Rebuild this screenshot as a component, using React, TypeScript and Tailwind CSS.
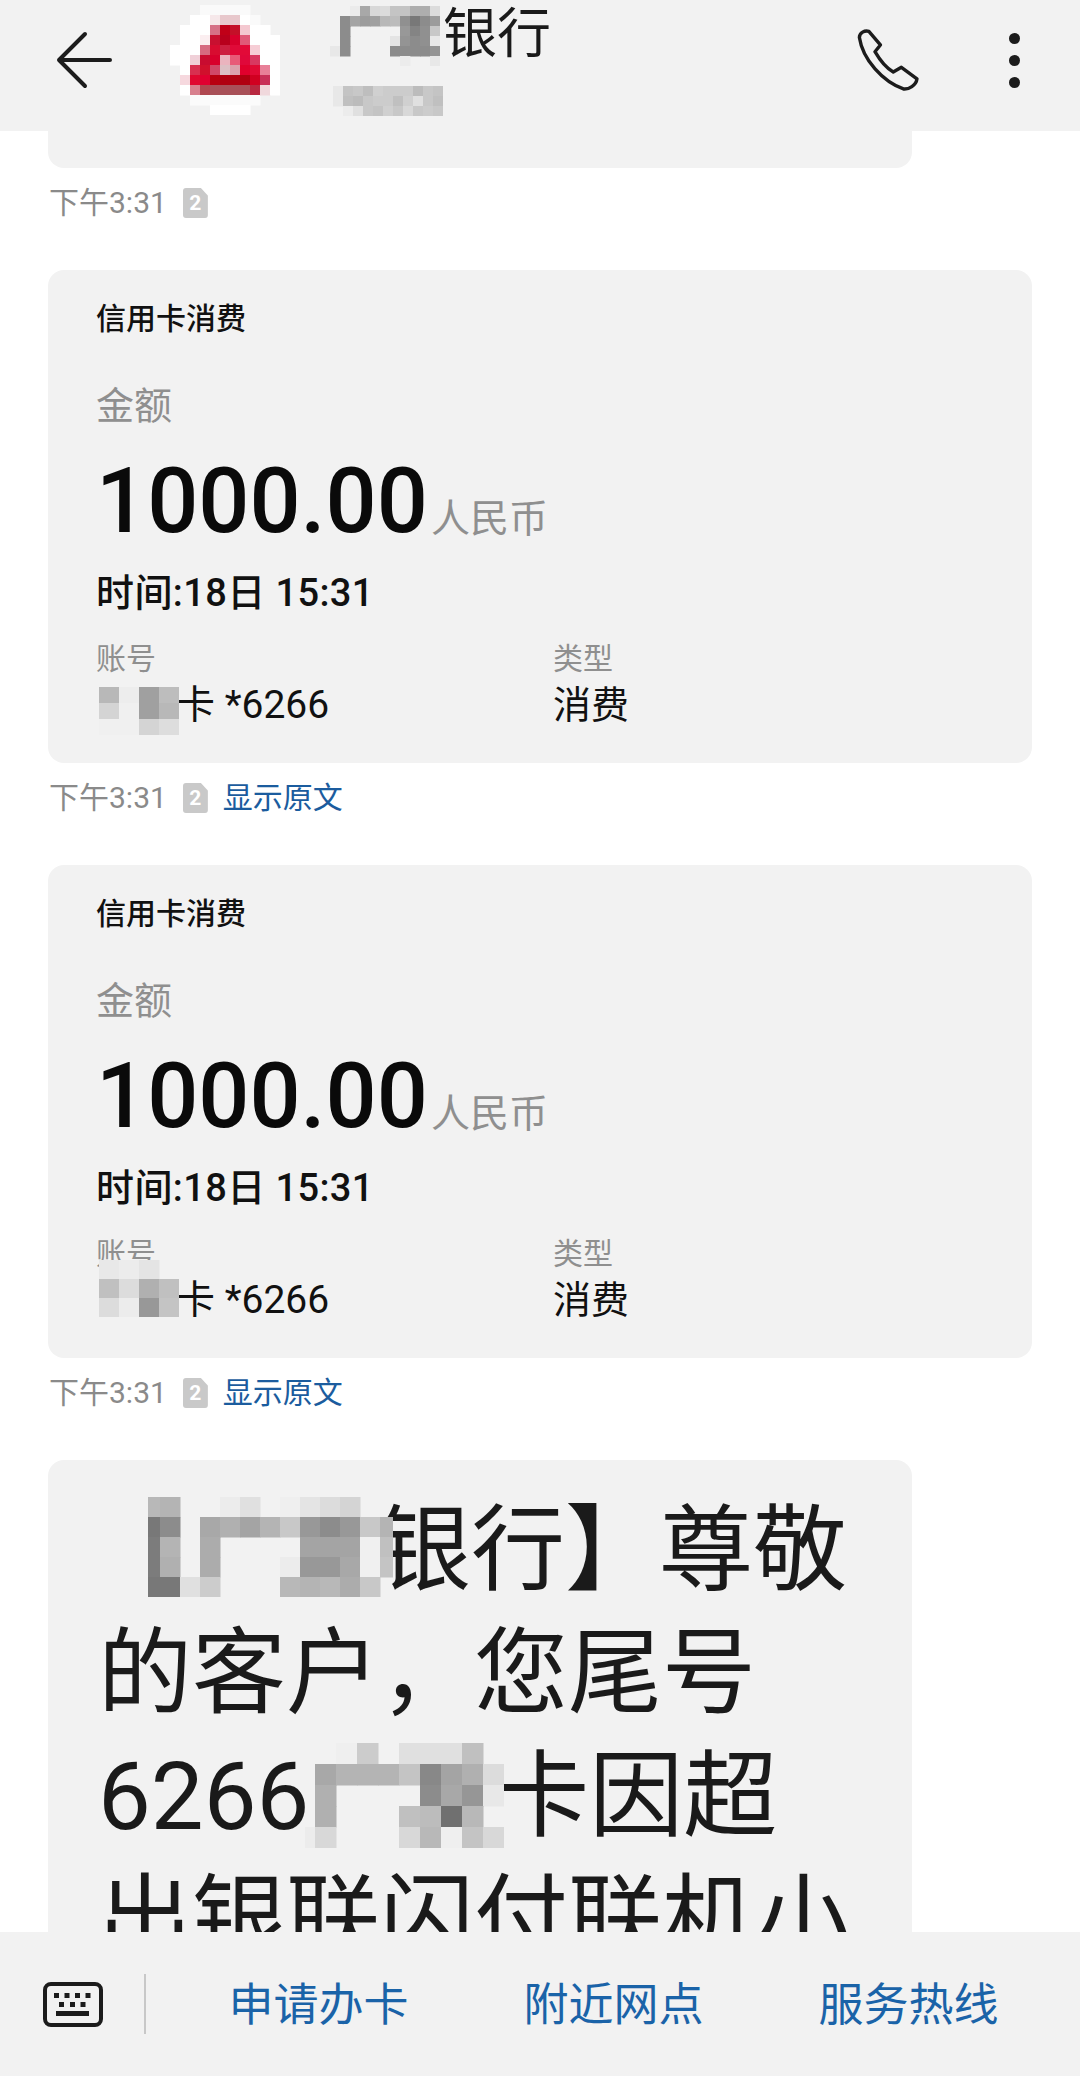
const logo = [
  ". . . . fa fa fa fa fa . . .",
  ". . . ff ff f6e8ea e8c8cc e8c8cc ff fa . .",
  ". . ff ff ff d67086 c00018 c41028 f4c8d0 ff ff .",
  ". . ff ff fbeef0 c81030 b8001c d8002c e05a78 ff ff ff",
  ". ff ff ff d66a80 d80c30 cc2040 e00a38 e20a38 f6cdd5 ff ff",
  ". ff ff f0d0d8 c80c30 d8002c eab4be e85a78 e0083a d83860 ff ff",
  ". . ff d83050 d0102c d04868 dcc0c4 dca0ac e0002c e00a34 e88098 ff",
  ". . f6d8de e00830 e00030 b80010 b00010 b00010 b00010 d00020 c83058 ff",
  ". . ff d8808e b04850 a85058 a85058 a85058 a85058 b82840 f0d8dc ff",
  ". . . fb fb fb fb fb fb fb . .",
  ". . . . . ff ff ff ff . . .",
];

const titleBlur = [
  ". . . eb a8 d8 dc c4 c4 ae ae dc",
  ". . 8c a4 9c a0 b8 bc 90 78 8c 9c",
  ". . 8c . . . . . 98 84 90 c8",
  ". . 8c . . . . e4 94 8c 90 e8",
  ". e8 8c . . . . 8c 8c 8c 8c 94",
  ". . . . . . . . ec . . e8",
];

const numberBlur = [
  ". e8 c4 c8 be d0 cc cc cc bc c8 c4",
  ". e8 c0 bc c8 cc cc c0 d0 e0 c8 c0",
  ". . ec e0 c8 c4 d0 c8 d8 c8 cc c8",
];

const accountBlurTop = [
  "b8 ed a0 bd",
  "d4 f0 a0 b8",
  "f0 f0 d4 dd",
];

const accountBlurBottom = [
  "e8 ec e4 .",
  "c0 dc b0 c0",
  "dc ec 98 c4",
];

const bankBlur = [
  "b8 b4 . . ec e0 . ef e4 dc d4 . .",
  "78 8c . a8 b0 a4 b4 c8 98 8c 98 c8 b4",
  "7c b4 . ac . . . . a4 a4 a4 f0 c0",
  "7c b0 . ac . . . ec 98 98 a8 f0 c4",
  "78 78 e0 cc . . . b8 b4 b8 ac c8 .",
];

const cardBlur = [
  ". . ef cc . e0 e0 e0 c0 .",
  ". a8 b4 b4 b4 c4 88 a4 b0 dc",
  ". b0 . . . . 8c a8 96 e8",
  ". b0 . . . c0 bc 70 b8 .",
  "ec d8 . . . d8 b8 ef c4 d8",
];

// pixelated redaction blocks, each token is one cell colour
const Mosaic = ({
  rows,
  cw,
  ch,
  trimLeft = 0,
  trimRight = 0,
  className,
}: {
  rows: string[];
  cw: number;
  ch: number;
  trimLeft?: number;
  trimRight?: number;
  className?: string;
}) => {
  const cells = rows.map((r) => r.split(" "));
  const w = Math.max(...cells.map((r) => r.length)) * cw - trimLeft - trimRight;
  const h = cells.length * ch;
  return (
    <svg width={w} height={h} viewBox={`${trimLeft} 0 ${w} ${h}`} className={className}>
      {cells.map((r, y) =>
        r.map((t, x) =>
          t === "." ? null : (
            <rect
              key={`${x}-${y}`}
              x={x * cw}
              y={y * ch}
              width={cw + 0.5}
              height={ch + 0.5}
              fill={t.length === 2 ? `#${t}${t}${t}` : `#${t}`}
            />
          ),
        ),
      )}
    </svg>
  );
};

const DocBadge = () => (
  <div className="relative w-[25px] h-[30px] ml-[16px] bg-[#c9c9c9] rounded-[3px] [clip-path:polygon(0_0,72%_0,100%_25%,100%_100%,0_100%)] flex items-center justify-center text-white text-[21px] font-bold leading-none">
    2
  </div>
);

const TimeRow = ({ link }: { link?: boolean }) => (
  <div className="h-[102px] pt-[17px] pl-[49px]">
    <div className="flex items-center h-9">
      <span className="text-[30px] leading-9 text-[#8a8a8a]">下午3:31</span>
      <DocBadge />
      {link && (
        <span className="ml-[15px] text-[30px] leading-9 text-[#1b5c9e]">
          显示原文
        </span>
      )}
    </div>
  </div>
);

const ExpenseCard = ({ bottom }: { bottom?: boolean }) => (
  <div className="relative mx-[48px] h-[493px] rounded-[16px] bg-[#f2f2f2] pt-[29px] pl-[48px]">
    <div className="text-[30px] leading-10 font-medium text-[#111]">
      信用卡消费
    </div>
    <div className="mt-[43px] text-[38px] leading-[48px] text-[#8f8f8f]">
      金额
    </div>
    <div className="mt-[22px] flex items-baseline h-[100px] leading-[100px]">
      <span className="text-[90px] font-medium text-[#0a0a0a]">1000.00</span>
      <span className="ml-[3px] text-[39px] text-[#8f8f8f]">人民币</span>
    </div>
    <div className="mt-[17px] text-[38px] tracking-[0.4px] leading-[48px] font-medium text-[#111]">
      时间:18日 15:31
    </div>
    <div className="mt-[22px] flex">
      <div className="w-[457px]">
        <div className="text-[30px] leading-10 text-[#8f8f8f]">账号</div>
        <div className="mt-[2px] pl-[80px] text-[39px] leading-[48px] text-[#111]">
          卡 *6266
        </div>
      </div>
      <div>
        <div className="text-[30px] leading-10 text-[#8f8f8f]">类型</div>
        <div className="mt-[2px] text-[38px] leading-[48px] text-[#111]">
          消费
        </div>
      </div>
    </div>
    {bottom ? (
      <Mosaic
        rows={accountBlurBottom}
        cw={20}
        ch={19}
        className="absolute left-[51px] top-[395px]"
      />
    ) : (
      <Mosaic
        rows={accountBlurTop}
        cw={20}
        ch={16}
        className="absolute left-[51px] top-[417px]"
      />
    )}
  </div>
);

const MessageCard = () => (
  <div className="mx-[48px] rounded-t-[16px] bg-[#f2f2f2] pt-[30px] pl-[50px] text-[94px] leading-[123px] text-[#1a1a1a]">
    <div className="h-[123px] flex items-center whitespace-nowrap">
      <Mosaic
        rows={bankBlur}
        cw={20}
        ch={20}
        trimLeft={8}
        trimRight={7}
        className="relative z-10 ml-[50px] mr-[-16px] -mt-[10px] shrink-0"
      />
      <span>银行】尊敬</span>
    </div>
    <div className="h-[123px] whitespace-nowrap">的客户，您尾号</div>
    <div className="h-[123px] flex items-center whitespace-nowrap">
      <span>6266</span>
      <Mosaic
        rows={cardBlur}
        cw={21}
        ch={21}
        trimLeft={11}
        className="relative z-10 ml-[-4px] mr-[-9px] -mt-[4px] shrink-0"
      />
      <span>卡因超</span>
    </div>
    <div className="h-[123px] whitespace-nowrap">出银联闪付联机小</div>
  </div>
);

const Keyboard = () => (
  <svg width="60" height="45" viewBox="0 0 60 45" className="shrink-0">
    <rect x="2" y="2" width="56" height="41" rx="6" fill="none" stroke="#1c1c1c" strokeWidth="4" />
    <g fill="#1c1c1c">
      <rect x="11" y="11" width="5" height="5" />
      <rect x="21.5" y="11" width="5" height="5" />
      <rect x="32" y="11" width="5" height="5" />
      <rect x="42.5" y="11" width="5" height="5" />
      <rect x="16" y="20" width="5" height="5" />
      <rect x="27" y="20" width="5" height="5" />
      <rect x="37.5" y="20" width="5" height="5" />
      <rect x="13" y="29" width="33" height="5" />
    </g>
  </svg>
);

export default function App() {
  return (
    <div
      lang="zh-CN"
      className="h-[2076px] w-[1080px] overflow-hidden flex flex-col bg-white font-[Roboto,'Noto_Sans_CJK_SC',sans-serif]"
    >
      <header className="h-[131px] shrink-0 bg-[#f2f2f2] flex items-start">
        <svg width="56" height="58" viewBox="0 0 56 58" className="ml-[56px] mt-[31px]">
          <path
            d="M29 3 L3 29 L29 55 M3 29 H54"
            fill="none"
            stroke="#1c1c1c"
            strokeWidth="4"
            strokeLinecap="round"
            strokeLinejoin="round"
          />
        </svg>
        <Mosaic rows={logo} cw={10} ch={10} className="ml-[48px] mt-[5px] blur-[0.5px]" />
        <div className="ml-[40px] mt-[6px]">
          <div className="flex h-[60px] items-center">
            <Mosaic rows={titleBlur} cw={10} ch={10} className="blur-[0.4px]" />
            <span className="ml-[3px] -mt-[3px] text-[54px] leading-none text-[#1a1a1a]">银行</span>
          </div>
          <Mosaic rows={numberBlur} cw={10} ch={10} className="mt-5 ml-[3px] blur-[0.5px]" />
        </div>
        <svg width="63" height="63" viewBox="50 56 186 186" className="ml-auto mt-[28px]">
          <path
            d="M60 84 C60 70 76 62 88 66 L122 106 L106 126 C120 150 140 175 160 186 L184 172 L230 206 C228 225 205 238 190 236 C130 215 70 150 60 84 Z"
            fill="none"
            stroke="#1c1c1c"
            strokeWidth="10"
            strokeLinejoin="round"
          />
        </svg>
        <div className="ml-[90px] mr-[60px] mt-[33px] flex flex-col gap-[11px]">
          <div className="w-[11px] h-[11px] rounded-full bg-[#1c1c1c]" />
          <div className="w-[11px] h-[11px] rounded-full bg-[#1c1c1c]" />
          <div className="w-[11px] h-[11px] rounded-full bg-[#1c1c1c]" />
        </div>
      </header>

      <main className="flex-1 overflow-hidden">
        <div className="ml-[48px] w-[864px] h-[37px] rounded-b-[16px] bg-[#f2f2f2]" />
        <TimeRow />
        <ExpenseCard />
        <TimeRow link />
        <ExpenseCard bottom />
        <TimeRow link />
        <div className="w-[960px]">
          <MessageCard />
        </div>
      </main>

      <footer className="h-[144px] shrink-0 bg-[#f2f2f2] flex items-center pl-[43px] pr-[24px]">
        <Keyboard />
        <div className="ml-[41px] w-[2px] h-[60px] bg-[#c8c8c8]" />
        <div className="ml-[25px] mt-[2px] flex-1 grid grid-cols-3 text-center text-[45px] leading-none text-[#1a63a8]">
          <span>申请办卡</span>
          <span>附近网点</span>
          <span>服务热线</span>
        </div>
      </footer>
    </div>
  );
}
